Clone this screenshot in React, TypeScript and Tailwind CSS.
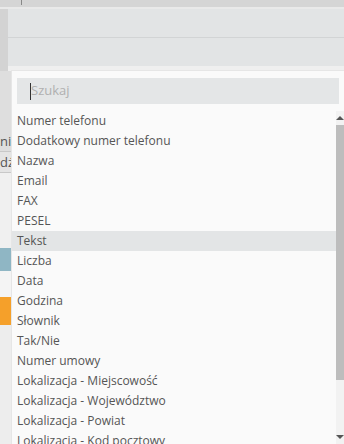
import React from "react";

const items = [
  "Numer telefonu",
  "Dodatkowy numer telefonu",
  "Nazwa",
  "Email",
  "FAX",
  "PESEL",
  "Tekst",
  "Liczba",
  "Data",
  "Godzina",
  "Słownik",
  "Tak/Nie",
  "Numer umowy",
  "Lokalizacja - Miejscowość",
  "Lokalizacja - Województwo",
  "Lokalizacja - Powiat",
  "Lokalizacja - Kod pocztowy",
];

function Dropdown() {
  return (
    <div className="absolute left-[11px] top-[70px] right-0 bottom-0 bg-[#fafafa] border-l border-t border-[#e6e6e6] flex flex-col">
      <div className="px-[5px] pt-[7px] pb-[7px]">
        <div className="h-[26px] bg-[#e4e6e7] flex items-center pl-[13px]">
          <span className="w-px h-[17px] bg-[#333]"></span>
          <span className="text-[13px] text-[#b0b0b0]">Szukaj</span>
        </div>
      </div>
      <div className="flex flex-1 min-h-0">
        <ul className="flex-1">
          {items.map((item) => (
            <li
              key={item}
              className={
                item === "Tekst"
                  ? "h-5 leading-5 pl-[5px] text-[12px] text-[#555] bg-[#e3e5e6] whitespace-nowrap"
                  : "h-5 leading-5 pl-[5px] text-[12px] text-[#555] whitespace-nowrap"
              }
            >
              {item}
            </li>
          ))}
        </ul>
        <div className="w-2 bg-[#f2f2f2] flex flex-col">
          <div className="h-[14px] flex items-center justify-center">
            <div className="w-0 h-0 border-l-[4px] border-r-[4px] border-b-[4px] border-l-transparent border-r-transparent border-b-[#555]"></div>
          </div>
          <div className="h-[255px] bg-[#bdbdbd]"></div>
          <div className="flex-1"></div>
          <div className="h-[14px] flex items-center justify-center">
            <div className="w-0 h-0 border-l-[4px] border-r-[4px] border-t-[4px] border-l-transparent border-r-transparent border-t-[#555]"></div>
          </div>
        </div>
      </div>
    </div>
  );
}

export default function App() {
  return (
    <div className="relative w-[344px] h-[444px] overflow-hidden bg-[#ededed] font-['Open_Sans',sans-serif]">
      <div className="h-[7px] bg-[#d5d5d5] pl-[21px]">
        <span className="block w-px h-[5px] bg-[#888]"></span>
      </div>
      <div className="h-[2px] bg-[#e9e9e9]"></div>
      <div className="flex">
        <div className="w-2 bg-[#d3d3d3]"></div>
        <div className="flex-1 flex flex-col">
          <div className="h-[28px] bg-[#e2e4e5]"></div>
          <div className="h-px bg-[#d2d4d5]"></div>
          <div className="h-[28px] bg-[#e2e4e5]"></div>
          <div className="h-[5px] bg-[#efefef]"></div>
        </div>
      </div>
      <div className="flex flex-col text-[13px] text-[#555]">
        <div className="h-[60px] bg-[#dedede]"></div>
        <div className="h-[20px] bg-[#dedede] leading-5">ni</div>
        <div className="h-px bg-[#c8c8c8]"></div>
        <div className="h-[20px] bg-[#e4e4e4] leading-5">dź</div>
        <div className="h-px bg-[#c8c8c8]"></div>
        <div className="h-[75px] bg-[#f0f0f0]"></div>
        <div className="h-[23px] bg-[#8fb6c4]"></div>
        <div className="h-[26px] bg-[#f4f4f4]"></div>
        <div className="h-[28px] bg-[#f5a02a]"></div>
      </div>
      <Dropdown />
    </div>
  );
}
